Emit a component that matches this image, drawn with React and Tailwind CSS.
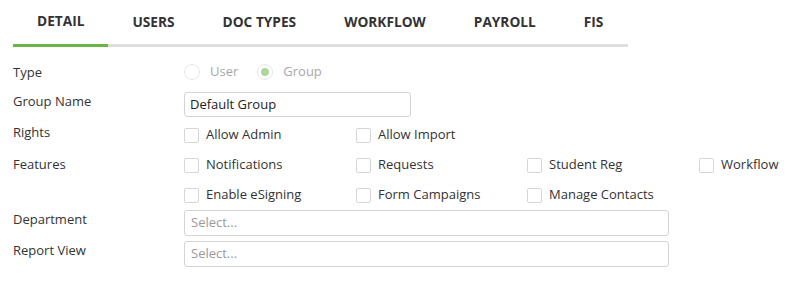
import React from "react";

const font = { fontFamily: '"Open Sans", "Noto Sans", sans-serif' };

function Checkbox({ label }) {
  return (
    <div className="flex h-[20px] items-center">
      <span className="box-border h-[15px] w-[15px] shrink-0 rounded-[2px] border border-[#d6d6d6] bg-white" />
      <span className="ml-[7px] whitespace-nowrap text-[13px] text-[#333]">{label}</span>
    </div>
  );
}

function Radio({ label, checked }) {
  return (
    <div className="flex h-[20px] items-center">
      <span className="box-border flex h-[16px] w-[16px] items-center justify-center rounded-full border border-[#e8e8e8] bg-white">
        {checked && <span className="h-[8px] w-[8px] rounded-full bg-[#a9d99a]" />}
      </span>
      <span className="ml-[10px] text-[13px] text-[#a8a8a8]">{label}</span>
    </div>
  );
}

const tabs = ["DETAIL", "USERS", "DOC TYPES", "WORKFLOW", "PAYROLL", "FIS"];

export default function App() {
  return (
    <div className="h-[292px] w-[792px] bg-white text-[#333]" style={font}>
      <div className="ml-[13px] flex w-[615px] border-b-[3px] border-[#dedede]">
        {tabs.map((t, i) => (
          <div
            key={t}
            className={
              "-mb-[3px] flex h-[47px] items-center px-[24px] pb-[2px] text-[13.7px] font-bold text-[#333] " +
              (i === 0 ? "border-b-[3px] border-[#6cb244]" : "")
            }
          >
            {t}
          </div>
        ))}
      </div>

      <div className="pl-[13px]">
        <div className="mt-[15px] flex">
          <div className="w-[171px] text-[13px] leading-[20px]">Type</div>
          <div className="flex gap-[19px]">
            <Radio label="User" />
            <Radio label="Group" checked />
          </div>
        </div>

        <div className="mt-[9px] flex">
          <div className="w-[171px] text-[13px] leading-[20px]">Group Name</div>
          <div className="mt-[1px] box-border flex h-[25px] w-[227px] items-center rounded-[3px] border border-[#d4d4d4] px-[5px] text-[13px] text-[#222]">
            Default Group
          </div>
        </div>

        <div className="mt-[5px] flex">
          <div className="w-[171px] text-[13px] leading-[20px]">Rights</div>
          <div className="mt-[3px] grid grid-cols-[172px_171px_172px_auto]">
            <Checkbox label="Allow Admin" />
            <Checkbox label="Allow Import" />
          </div>
        </div>

        <div className="mt-[9px] flex">
          <div className="w-[171px] text-[13px] leading-[20px]">Features</div>
          <div className="mt-[1px] grid grid-cols-[172px_171px_172px_auto] gap-y-[10px]">
            <Checkbox label="Notifications" />
            <Checkbox label="Requests" />
            <Checkbox label="Student Reg" />
            <Checkbox label="Workflow" />
            <Checkbox label="Enable eSigning" />
            <Checkbox label="Form Campaigns" />
            <Checkbox label="Manage Contacts" />
          </div>
        </div>

        <div className="mt-[4px] flex">
          <div className="w-[171px] text-[13px] leading-[20px]">Department</div>
          <div className="mt-[1px] box-border flex h-[26px] w-[485px] items-center rounded-[3px] border border-[#d4d4d4] px-[6px] text-[13px] text-[#999]">
            Select...
          </div>
        </div>

        <div className="mt-[4px] flex">
          <div className="w-[171px] text-[13px] leading-[20px]">Report View</div>
          <div className="mt-[1px] box-border flex h-[26px] w-[485px] items-center rounded-[3px] border border-[#d4d4d4] px-[6px] text-[13px] text-[#999]">
            Select...
          </div>
        </div>
      </div>
    </div>
  );
}
